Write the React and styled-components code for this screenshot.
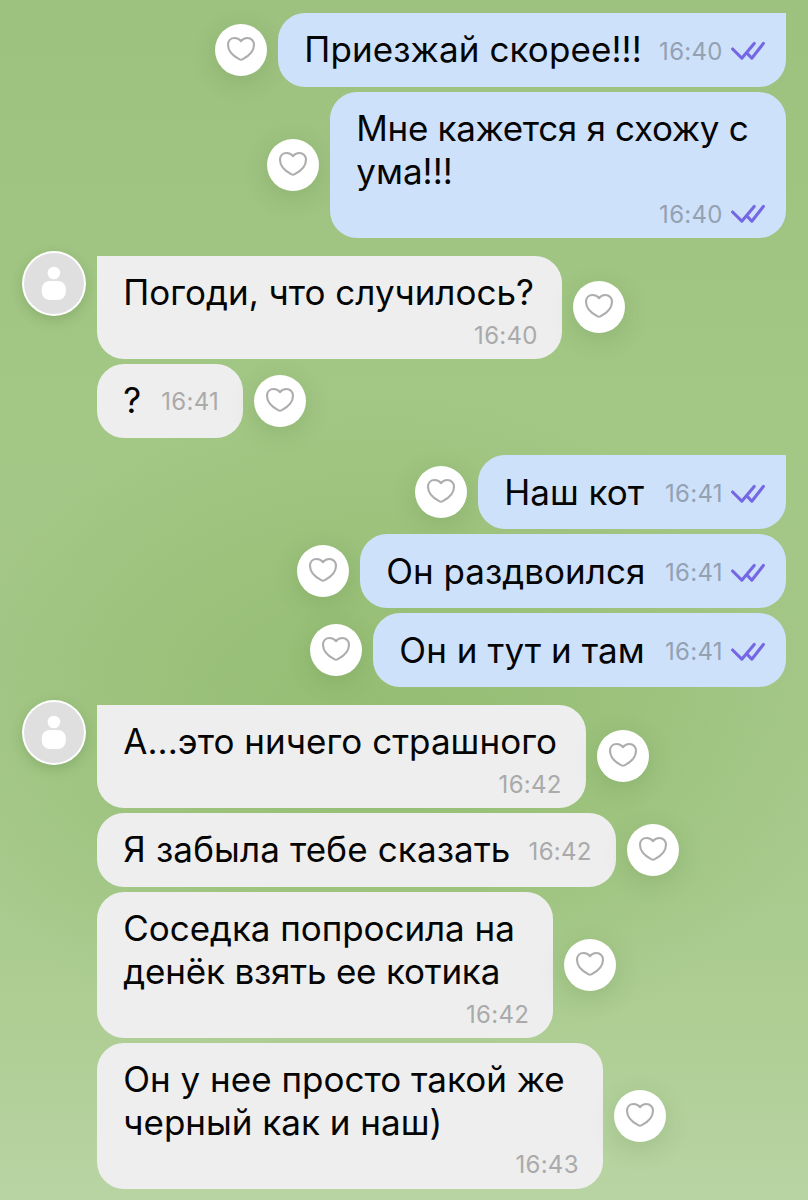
import React from "react";
import styled, { createGlobalStyle } from "styled-components";

const GlobalStyle = createGlobalStyle`
  * { box-sizing: border-box; }
  html, body { margin: 0; padding: 0; }
`;

const Chat = styled.main`
  width: 808px;
  height: 1200px;
  overflow: hidden;
  padding: 13px 22px 0;
  display: flex;
  flex-direction: column;
  gap: 17.7px;
  font-family: Inter, "Liberation Sans", sans-serif;
  background:
    radial-gradient(ellipse 460px 340px at 380px 730px, rgba(146, 187, 110, 0.85) 0%, rgba(146, 187, 110, 0.55) 45%, rgba(146, 187, 110, 0) 100%),
    linear-gradient(180deg, #9dc17e 0%, #9fc381 15%, #a3c785 36%, #a4c788 55%, #a9cb8e 75%, #b0cf97 88%, #b8d4a3 100%);
`;

const Group = styled.section`
  display: flex;
  flex-direction: column;
  gap: 5px;
  ${({ $own }) => ($own ? "" : "padding-left: 75px; gap: 4.9px; position: relative;")}
`;

const Row = styled.div`
  display: flex;
  align-items: center;
  gap: 11px;
  flex-direction: ${({ $own }) => ($own ? "row-reverse" : "row")};
`;

const Bubble = styled.div`
  width: ${({ $width }) => $width}px;
  height: ${({ $height }) => $height}px;
  padding: 15.3px ${({ $own }) => ($own ? 21 : 24.5)}px 15.7px 26.3px;
  display: flex;
  flex-direction: ${({ $stacked }) => ($stacked ? "column" : "row")};
  justify-content: space-between;
  border-radius: 27px;
  ${({ $first, $own }) => $first && ($own ? "border-top-right-radius: 0;" : "border-top-left-radius: 0;")}
  background: ${({ $own }) => ($own ? "#cee1fa" : "#eeeeee")};
`;

const Text = styled.p`
  margin: 0;
  color: #050505;
  font-size: 35px;
  line-height: 43px;
  white-space: nowrap;
`;

const Line = styled.span`
  display: block;
  letter-spacing: ${({ $track }) => $track}px;
`;

const Meta = styled.div`
  display: flex;
  align-items: center;
  justify-content: flex-end;
  gap: 8.5px;
  height: ${({ $stacked }) => ($stacked ? 16 : 46)}px;
  color: ${({ $own }) => ($own ? "#93a1b3" : "#aaaaaa")};
  font-size: 24px;
  line-height: 30px;
`;

const Time = styled.time`
  padding-top: 1px;
  letter-spacing: 0.3px;
  margin-right: -0.3px;
`;

const Like = styled.button`
  width: 52px;
  height: 52px;
  padding: 0 0 2px;
  border: 0;
  border-radius: 50%;
  flex: none;
  display: flex;
  align-items: center;
  justify-content: center;
  background: #fff;
  box-shadow: 0 6px 24px rgba(60, 100, 40, 0.17);
`;

const Avatar = styled.div`
  position: absolute;
  left: 0;
  top: -4.5px;
  width: 64px;
  height: 65px;
  border-radius: 50%;
  border: 2px solid #fff;
  background: #dfdfdf;
  box-shadow: 0 4px 12px rgba(60, 100, 40, 0.22);
`;

const HeartIcon = () => (
  <svg width="30" height="26" viewBox="0 0 30 26" fill="none" stroke="#adadaf" strokeWidth="2.1" strokeLinejoin="round">
    <path d="M15 5.2C13.4 2.9 11.2 2 8.7 2C4.6 2 2 4.9 2 8.8C2 14.8 7.2 20.2 13.6 23.4Q15 24.1 16.4 23.4C22.8 20.2 28 14.8 28 8.8C28 4.9 25.4 2 21.3 2C18.8 2 16.6 2.9 15 5.2Z" />
  </svg>
);

const ChecksIcon = () => (
  <svg width="34" height="20" viewBox="0 0 34 20" fill="none" stroke="#7567e4" strokeWidth="3.1" strokeLinecap="round" strokeLinejoin="round">
    <path d="M1.6 8L10.8 17.2L23.2 2.4" />
    <path d="M16.5 12.6L20.8 17.2L32.4 2.4" />
  </svg>
);

const PersonIcon = () => (
  <svg width="60" height="61" viewBox="0 0 60 61" fill="#fff">
    <circle cx="29.9" cy="20" r="6.3" />
    <rect x="17.8" y="28" width="24" height="19" rx="8" />
  </svg>
);

const groups = [
  { own: true, messages: [
    { lines: [["Приезжай скорее!!!", 0.09]], time: "16:40", width: 508, height: 74 },
    { lines: [["Мне кажется я схожу с", -0.33], ["ума!!!", 0]], time: "16:40", width: 456, height: 146, stacked: true },
  ] },
  { own: false, messages: [
    { lines: [["Погоди, что случилось?", 0]], time: "16:40", width: 465, height: 103, stacked: true },
    { lines: [["?", 0]], time: "16:41", width: 146.3, height: 74 },
  ] },
  { own: true, messages: [
    { lines: [["Наш кот", 0]], time: "16:41", width: 308, height: 74 },
    { lines: [["Он раздвоился", 0]], time: "16:41", width: 426, height: 74 },
    { lines: [["Он и тут и там", 0.07]], time: "16:41", width: 413, height: 74 },
  ] },
  { own: false, messages: [
    { lines: [["А...это ничего страшного", 0.04]], time: "16:42", width: 489, height: 103, stacked: true },
    { lines: [["Я забыла тебе сказать", 0.13]], time: "16:42", width: 519, height: 74 },
    { lines: [["Соседка попросила на", -0.06], ["денёк взять ее котика", -0.2]], time: "16:42", width: 456.4, height: 146, stacked: true },
    { lines: [["Он у нее просто такой же", 0], ["черный как и наш)", 0]], time: "16:43", width: 506, height: 146, stacked: true },
  ] },
];

const Message = ({ message, own, first }) => (
  <Row $own={own}>
    <Bubble $own={own} $first={first} $width={message.width} $height={message.height} $stacked={message.stacked}>
      <Text>
        {message.lines.map(([line, track]) => <Line key={line} $track={track}>{line}</Line>)}
      </Text>
      <Meta $own={own} $stacked={message.stacked}>
        <Time>{message.time}</Time>
        {own && <ChecksIcon />}
      </Meta>
    </Bubble>
    <Like aria-label="Нравится"><HeartIcon /></Like>
  </Row>
);

export default function App() {
  return (
    <>
      <GlobalStyle />
      <Chat>
        {groups.map((group, index) => (
          <Group key={index} $own={group.own}>
            {!group.own && <Avatar><PersonIcon /></Avatar>}
            {group.messages.map((message, i) => (
              <Message key={i} message={message} own={group.own} first={i === 0} />
            ))}
          </Group>
        ))}
      </Chat>
    </>
  );
}
